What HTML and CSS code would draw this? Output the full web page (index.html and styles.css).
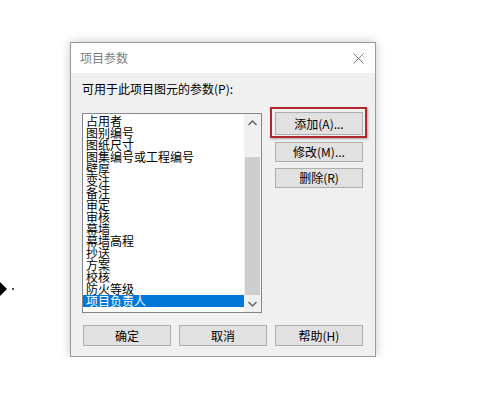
FILE: index.html
```html
<!DOCTYPE html>
<html lang="zh-CN">

<head>
    <meta charset="UTF-8">
    <title>项目参数</title>
    <link rel="stylesheet" href="styles.css">
</head>

<body>
    <svg class="pointer" width="16" height="16" viewBox="0 0 16 16">
        <polygon points="0,1 7,8 0,15" fill="#000"></polygon>
        <rect x="12" y="7" width="2" height="2" fill="#555"></rect>
    </svg>

    <div class="dialog">
        <div class="titlebar">
            <span class="title">项目参数</span>
            <svg class="close" width="11" height="11" viewBox="0 0 11 11">
                <path d="M0.5 0.5 L10.5 10.5 M10.5 0.5 L0.5 10.5" stroke="#7a7a7a" stroke-width="1" fill="none"></path>
            </svg>
        </div>

        <div class="content">
            <div class="label">可用于此项目图元的参数(P):</div>

            <div class="main">
                <div class="listbox">
                    <ul class="items">
                        <li>占用者</li>
                        <li>图别编号</li>
                        <li>图纸尺寸</li>
                        <li>图集编号或工程编号</li>
                        <li>壁厚</li>
                        <li>变注</li>
                        <li>备注</li>
                        <li>审定</li>
                        <li>审核</li>
                        <li>幕墙</li>
                        <li>幕墙高程</li>
                        <li>抄送</li>
                        <li>方案</li>
                        <li>校核</li>
                        <li>防火等级</li>
                        <li class="selected">项目负责人</li>
                    </ul>
                    <div class="scrollbar">
                        <div class="arrow">
                            <svg width="9" height="6" viewBox="0 0 9 6">
                                <polyline points="0.5,5 4.5,1 8.5,5" stroke="#606060" stroke-width="1.4" fill="none"></polyline>
                            </svg>
                        </div>
                        <div class="track"><div class="thumb"></div></div>
                        <div class="arrow">
                            <svg width="9" height="6" viewBox="0 0 9 6">
                                <polyline points="0.5,1 4.5,5 8.5,1" stroke="#606060" stroke-width="1.4" fill="none"></polyline>
                            </svg>
                        </div>
                    </div>
                </div>

                <div class="side">
                    <button class="btn btn-add">添加(A)...</button>
                    <button class="btn btn-side">修改(M)...</button>
                    <button class="btn btn-side">删除(R)</button>
                </div>
            </div>

            <div class="footer">
                <button class="btn btn-foot">确定</button>
                <button class="btn btn-foot">取消</button>
                <button class="btn btn-foot">帮助(H)</button>
            </div>
        </div>
    </div>
</body>

</html>
```

FILE: styles.css
```css
:root {
    --color-face: #f0f0f0;
    --color-button: #e1e1e1;
    --color-button-border: #adadad;
    --color-select: #0078d7;
    --color-focus: #b0262b;
}

body {
    margin: 0;
    padding: 42px 0 0 70px;
    background: #fff;
    font-family: "Noto Sans CJK SC", "Noto Sans", sans-serif;
    font-size: 12px;
    color: #000;
}

.pointer {
    position: absolute;
    left: 0;
    top: 281px;
}

.dialog {
    width: 306px;
    height: 315px;
    box-sizing: border-box;
    border: 1px solid #9a9a9a;
    background: var(--color-face);
    box-shadow: 0 0 10px rgba(0, 0, 0, 0.22);
    display: flex;
    flex-direction: column;
}

.titlebar {
    height: 30px;
    background: #fff;
    display: flex;
    align-items: center;
    justify-content: space-between;
    padding: 0 11px 0 9px;
}

.title {
    color: #7d7d7d;
    line-height: 14px;
}

.content {
    padding: 0 12px 0 11px;
}

.label {
    margin-top: 9px;
    line-height: 14px;
}

.main {
    display: flex;
    margin-top: 17px;
}

.listbox {
    width: 180px;
    height: 200px;
    box-sizing: border-box;
    border: 1px solid #828790;
    background: #fff;
    display: flex;
    overflow: hidden;
}

.items {
    list-style: none;
    margin: 0;
    padding: 1px 0 0 0;
    flex: 1;
    overflow: hidden;
}

.items li {
    line-height: 12px;
    height: 12px;
    padding-left: 3px;
    white-space: nowrap;
}

.items li.selected {
    background: var(--color-select);
    color: #fff;
}

.scrollbar {
    width: 17px;
    background: var(--color-face);
    display: flex;
    flex-direction: column;
}

.arrow {
    height: 17px;
    display: flex;
    align-items: center;
    justify-content: center;
}

.track {
    flex: 1;
    padding: 26px 1px 0 1px;
    display: flex;
    flex-direction: column;
}

.thumb {
    flex: 1;
    background: #cdcdcd;
}

.side {
    margin-left: 13px;
    display: flex;
    flex-direction: column;
    width: 88px;
}

.btn {
    font-family: inherit;
    font-size: 12px;
    color: #000;
    background: var(--color-button);
    border: 1px solid var(--color-button-border);
    padding: 0;
    margin: 0;
    line-height: 14px;
}

.btn-add {
    height: 23px;
    position: relative;
    margin-top: -1px;
}

.btn-add::after {
    content: "";
    position: absolute;
    left: -6px;
    right: -5px;
    top: -6px;
    bottom: -4px;
    border: 2px solid var(--color-focus);
    box-shadow: 1px 1px 2px rgba(0, 0, 0, 0.3);
}

.btn-side {
    height: 20px;
    margin-top: 7px;
}

.btn-side + .btn-side {
    margin-top: 6px;
}

.footer {
    display: flex;
    gap: 8px;
    margin-top: 12px;
    padding-left: 1px;
}

.btn-foot {
    width: 88px;
    height: 21px;
}
```
